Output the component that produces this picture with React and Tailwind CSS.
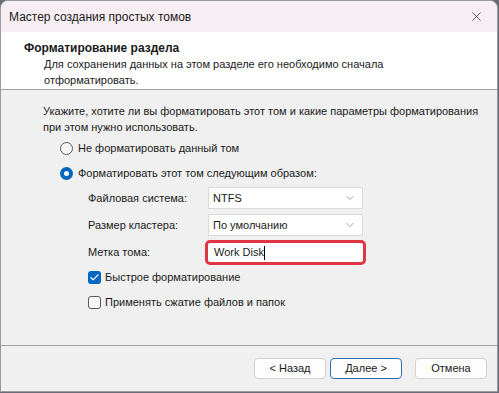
import { ChevronDown, X, Check } from "lucide-react";

const font = { fontFamily: '"Liberation Sans", Arial, sans-serif' };

const Radio = ({ checked, label }) => (
  <div className="flex items-center gap-[5px] h-[16px]">
    {checked ? (
      <span className="w-[13px] h-[13px] rounded-full bg-[#0067c0] flex items-center justify-center">
        <span className="w-[5px] h-[5px] rounded-full bg-white" />
      </span>
    ) : (
      <span className="w-[13px] h-[13px] rounded-full border border-[#5a5a5a] bg-[#f7f7f7]" />
    )}
    <span>{label}</span>
  </div>
);

const CheckBox = ({ checked, label }) => (
  <div className="flex items-center gap-[4px] h-[16px]">
    {checked ? (
      <span className="w-[13px] h-[13px] rounded-[3px] bg-[#0067c0] flex items-center justify-center">
        <Check size={11} strokeWidth={2.5} color="white" />
      </span>
    ) : (
      <span className="w-[13px] h-[13px] rounded-[3px] border border-[#5a5a5a] bg-[#f7f7f7]" />
    )}
    <span>{label}</span>
  </div>
);

const Select = ({ value }) => (
  <div className="w-[155px] h-[22px] bg-white border border-[#d9d9d9] flex items-center justify-between pl-[4px] pr-[6px]">
    <span className="text-[#1a1a1a]">{value}</span>
    <ChevronDown size={12} strokeWidth={1.2} color="#606060" />
  </div>
);

export default function App() {
  return (
    <div
      className="w-[499px] h-[393px] bg-[#6b6b78] text-[11px] text-[#1a1a1a] leading-none whitespace-nowrap"
      style={font}
    >
      <div className="w-[498px] h-[392px] flex flex-col bg-[#f0f0f0] border border-[#9a9a9a] rounded-tl-[8px] rounded-tr-[8px] overflow-hidden">
        {/* Title bar */}
        <div className="h-[31px] shrink-0 bg-[#f6eef2] flex items-center justify-between pl-[8px] pr-[13px]">
          <span className="text-[12px] text-[#1a1a1a]">Мастер создания простых томов</span>
          <X size={15} strokeWidth={1.1} color="#1a1a1a" />
        </div>

        {/* Header */}
        <div className="h-[58px] shrink-0 bg-white border-b border-[#a0a0a0] pl-[23px] pt-[10px]">
          <div className="font-bold text-[12px]">Форматирование раздела</div>
          <div className="pl-[20px] mt-[2px] leading-[16px]">
            Для сохранения данных на этом разделе его необходимо сначала
            <br />
            отформатировать.
          </div>
        </div>

        {/* Body */}
        <div className="flex-1 pl-[42px] pt-[13px]">
          <div className="leading-[16px]">
            Укажите, хотите ли вы форматировать этот том и какие параметры форматирования
            <br />
            при этом нужно использовать.
          </div>
          <div className="pl-[17px] mt-[5px] flex flex-col gap-[9px]">
            <Radio label="Не форматировать данный том" />
            <Radio checked label="Форматировать этот том следующим образом:" />
          </div>
          <div className="pl-[45px] mt-[6px] grid grid-cols-[120px_auto] gap-y-[5px] items-center">
            <span>Файловая система:</span>
            <Select value="NTFS" />
            <span>Размер кластера:</span>
            <Select value="По умолчанию" />
            <span className="-mt-[1px]">Метка тома:</span>
            <div className="w-[161px] h-[25px] -ml-[3px] -mt-[1px] border-[3px] border-[#df3545] rounded-[5px] bg-white flex items-center pl-[6px]">
              <span>Work Disk</span>
              <span className="w-px h-[14px] bg-black" />
            </div>
          </div>
          <div className="pl-[45px] mt-[4px] flex flex-col gap-[9px]">
            <CheckBox checked label="Быстрое форматирование" />
            <CheckBox label="Применять сжатие файлов и папок" />
          </div>
        </div>

        {/* Footer */}
        <div className="h-[46px] shrink-0 border-t border-[#a0a0a0] flex items-center justify-end pr-[10px]">
          <div className="flex gap-[4px]">
            <button className="w-[72px] h-[21px] bg-[#fdfdfd] border border-[#d0d0d0] rounded-[4px]">&lt; Назад</button>
            <button className="w-[72px] h-[21px] bg-[#fdfdfd] border border-[#2f6fb0] rounded-[4px]">Далее &gt;</button>
          </div>
          <button className="ml-[13px] w-[72px] h-[21px] bg-[#fdfdfd] border border-[#d0d0d0] rounded-[4px]">Отмена</button>
        </div>
      </div>
    </div>
  );
}
